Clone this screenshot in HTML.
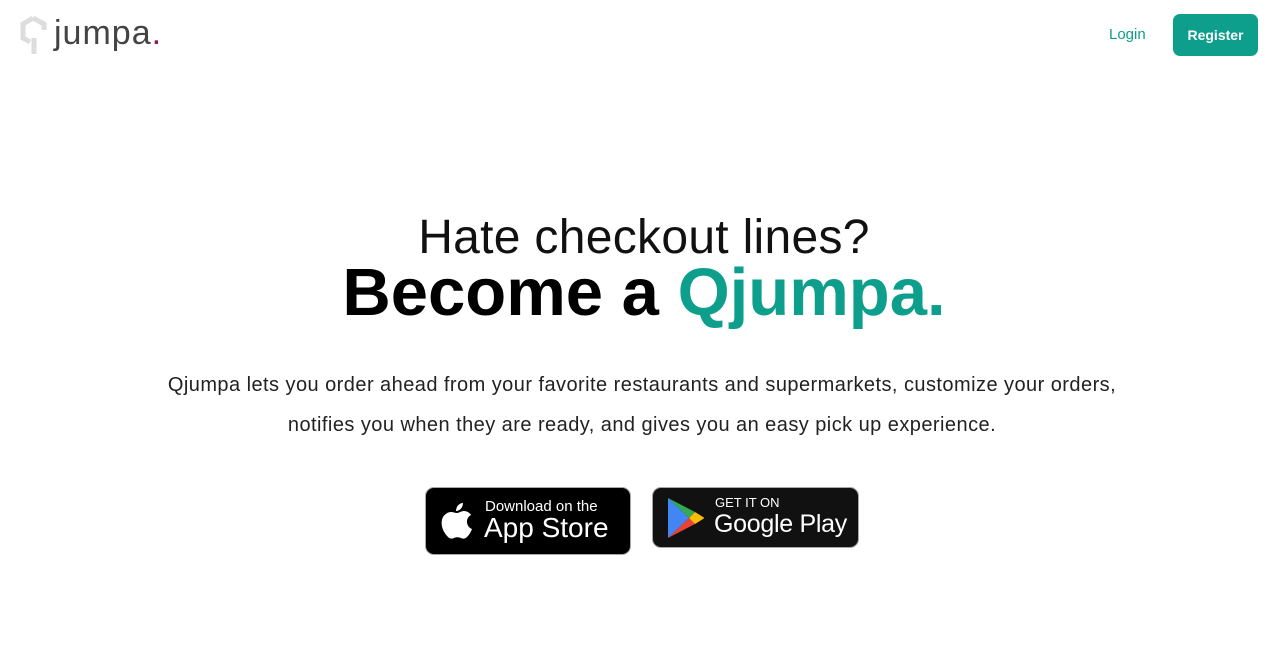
<!DOCTYPE html>
<html><head><style>
body{margin:0;width:1288px;height:653px;background:#fff;font-family:"Liberation Sans",sans-serif;position:relative;overflow:hidden}
.abs{position:absolute}
.logo{left:54px;top:14px;font-size:34px;color:#444;letter-spacing:1px}
.login{left:1109px;top:26px;font-size:15px;color:#0e9f8c}
.reg{left:1173px;top:14px;width:85px;height:42px;background:#0e9f8c;border-radius:7px;color:#fff;font-size:14px;font-weight:bold;text-align:center;line-height:42px}
.h1{left:0;width:1288px;text-align:center;top:210px;font-size:48px;font-weight:300;color:#111;letter-spacing:0.3px}
.h2{left:0;width:1288px;text-align:center;top:254px;font-size:67px;font-weight:bold;color:#000}
.h2 span{color:#0e9f8c}
.p{left:0;width:1284px;text-align:center;font-size:20px;color:#222;letter-spacing:0.45px}
.badge{background:#000;border:1.5px solid #a6a6a6;border-radius:9px;color:#fff;box-sizing:border-box}
</style></head><body>
<svg class="abs" style="left:20px;top:16px" width="28" height="40" viewBox="0 0 28 40"><path d="M13 2 L24 8 L24 14 M13 2 L3 8 L3 22 L10 26" fill="none" stroke="#ddd" stroke-width="5"/><path d="M14 22 L14 38" stroke="#ddd" stroke-width="5"/></svg>
<div class="abs logo">jumpa<span style="color:#8b1a5c">.</span></div>
<div class="abs login">Login</div>
<div class="abs reg">Register</div>
<div class="abs h1">Hate checkout lines?</div>
<div class="abs h2">Become a <span>Qjumpa.</span></div>
<div class="abs p" style="top:374px">Qjumpa lets you order ahead from your favorite restaurants and supermarkets, customize your orders,</div>
<div class="abs p" style="top:414px">notifies you when they are ready, and gives you an easy pick up experience.</div>
<div class="abs badge" style="left:425px;top:487px;width:206px;height:68px">
<svg class="abs" style="left:14px;top:15px" width="34" height="38" viewBox="0 0 34 38"><path d="M23 0c0 4-3 8-7 8 0-4 3-8 7-8zM17 10c2 0 4-2 7-2 3 0 6 2 7 4-6 3-5 12 1 14-1 3-3 6-5 8-2 2-4 2-6 1-3-1-5-1-7 0-2 1-4 1-6-1C2 28 0 20 3 14c2-3 5-5 8-5 2 0 4 1 6 1z" fill="#fff"/></svg>
<div class="abs" style="left:59px;top:10px;font-size:15px">Download on the</div>
<div class="abs" style="left:58px;top:24px;font-size:28px">App Store</div>
</div>
<div class="abs badge" style="left:652px;top:487px;width:207px;height:61px;background:#111">
<svg class="abs" style="left:14px;top:9px" width="38" height="42" viewBox="0 0 38 42"><path d="M1 1 L22 21 L1 41 Z" fill="#4285f4"/><path d="M1 1 L28 15 L22 21 Z" fill="#34a853"/><path d="M1 41 L22 21 L28 27 Z" fill="#ea4335"/><path d="M28 15 L36 20 Q38 21 36 22 L28 27 L22 21 Z" fill="#fbbc04"/></svg>
<div class="abs" style="left:62px;top:7px;font-size:13px">GET IT ON</div>
<div class="abs" style="left:61px;top:22px;font-size:25px;letter-spacing:-0.3px">Google Play</div>
</div>
</body></html>
